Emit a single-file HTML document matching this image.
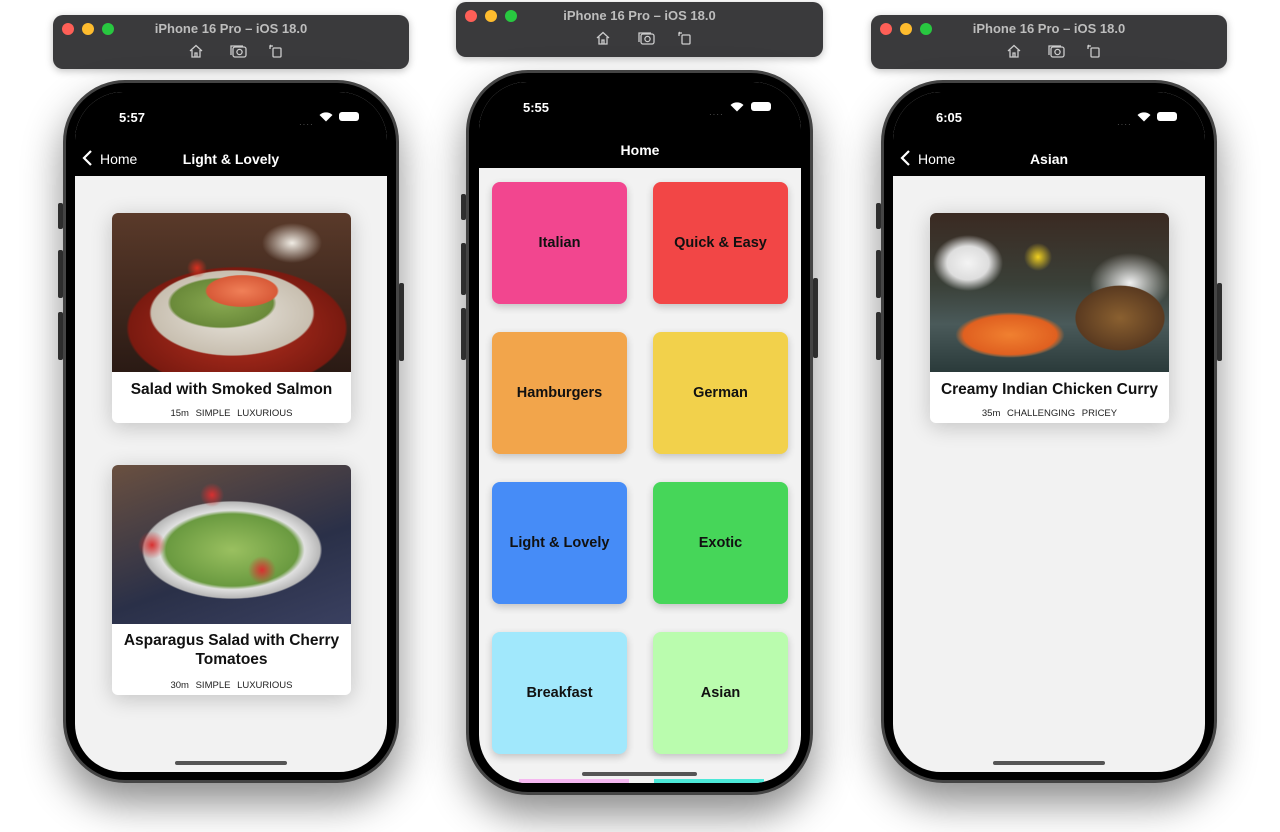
<!DOCTYPE html>
<html><head><meta charset="utf-8"><style>
*{margin:0;padding:0;box-sizing:border-box}
body{width:1280px;height:832px;background:#fff;position:relative;overflow:hidden;font-family:"Liberation Sans",sans-serif}
.a{position:absolute}
.tb{position:absolute;background:#3a3a3c;border-radius:10px;box-shadow:0 2px 8px rgba(0,0,0,.25)}
.tb .t{position:absolute;left:0;right:0;top:6px;text-align:center;color:#bdbdbd;font-weight:bold;font-size:13px}
.dot{position:absolute;top:8px;width:12px;height:12px;border-radius:50%}
.tb svg{position:absolute;top:28px}
.ph{position:absolute;border-radius:62px;background:#444;box-shadow:0 20px 40px rgba(0,0,0,.45)}
.ph .in{position:absolute;inset:3px;border-radius:59px;background:#000}
.scr{position:absolute;border-radius:48px;overflow:hidden;background:#f2f2f2}
.btn{position:absolute;width:5px;background:#3a3a3a;border-radius:2px}
.time{position:absolute;color:#fff;font-size:13px;font-weight:bold}
.nav{position:absolute;left:0;right:0;background:#000;color:#fff}
.card{position:absolute;background:#fff;border-radius:6px;overflow:hidden;box-shadow:0 4px 22px rgba(0,0,0,.2)}
.card .ti{position:absolute;left:0;right:0;text-align:center;font-weight:bold;font-size:15.5px;color:#111;line-height:19px}
.card .m{position:absolute;left:0;right:0;text-align:center;font-size:9.5px;color:#222;word-spacing:4px}
.tile{position:absolute;width:135px;height:122px;border-radius:8px;display:flex;align-items:center;justify-content:center;font-weight:bold;font-size:14.5px;color:#111;box-shadow:0 3px 8px rgba(0,0,0,.2)}
.home{position:absolute;height:4px;border-radius:2px;background:#555}
</style></head><body>

<div class="tb" style="left:53px;top:15px;width:356px;height:54px">
<div class="dot" style="left:9px;background:#fe5f57"></div><div class="dot" style="left:29px;background:#febc2e"></div><div class="dot" style="left:49px;background:#28c840"></div>
<div class="t">iPhone 16 Pro – iOS 18.0</div>
<svg style="left:135px" width="16" height="16" viewBox="0 0 16 16" fill="none" stroke="#ccc" stroke-width="1.3"><path d="M2 8L8 2.5 14 8M4 7v7h8V7M7 14v-4h2v4"/></svg>
<svg style="left:177px" width="18" height="16" viewBox="0 0 18 16" fill="none" stroke="#ccc" stroke-width="1.3"><rect x="3" y="4" width="13" height="10" rx="2"/><circle cx="9.5" cy="9" r="2.6"/><path d="M1 12V3h12"/></svg>
<svg style="left:215px" width="16" height="16" viewBox="0 0 16 16" fill="none" stroke="#ccc" stroke-width="1.3"><rect x="5" y="5" width="8" height="9" rx="1"/><path d="M2 6V3h3M3 2l-1 1 1 1"/></svg>
</div>
<div class="tb" style="left:456px;top:2px;width:367px;height:55px">
<div class="dot" style="left:9px;background:#fe5f57"></div><div class="dot" style="left:29px;background:#febc2e"></div><div class="dot" style="left:49px;background:#28c840"></div>
<div class="t">iPhone 16 Pro – iOS 18.0</div>
<svg style="left:139px" width="16" height="16" viewBox="0 0 16 16" fill="none" stroke="#ccc" stroke-width="1.3"><path d="M2 8L8 2.5 14 8M4 7v7h8V7M7 14v-4h2v4"/></svg>
<svg style="left:182px" width="18" height="16" viewBox="0 0 18 16" fill="none" stroke="#ccc" stroke-width="1.3"><rect x="3" y="4" width="13" height="10" rx="2"/><circle cx="9.5" cy="9" r="2.6"/><path d="M1 12V3h12"/></svg>
<svg style="left:221px" width="16" height="16" viewBox="0 0 16 16" fill="none" stroke="#ccc" stroke-width="1.3"><rect x="5" y="5" width="8" height="9" rx="1"/><path d="M2 6V3h3M3 2l-1 1 1 1"/></svg>
</div>
<div class="tb" style="left:871px;top:15px;width:356px;height:54px">
<div class="dot" style="left:9px;background:#fe5f57"></div><div class="dot" style="left:29px;background:#febc2e"></div><div class="dot" style="left:49px;background:#28c840"></div>
<div class="t">iPhone 16 Pro – iOS 18.0</div>
<svg style="left:135px" width="16" height="16" viewBox="0 0 16 16" fill="none" stroke="#ccc" stroke-width="1.3"><path d="M2 8L8 2.5 14 8M4 7v7h8V7M7 14v-4h2v4"/></svg>
<svg style="left:177px" width="18" height="16" viewBox="0 0 18 16" fill="none" stroke="#ccc" stroke-width="1.3"><rect x="3" y="4" width="13" height="10" rx="2"/><circle cx="9.5" cy="9" r="2.6"/><path d="M1 12V3h12"/></svg>
<svg style="left:215px" width="16" height="16" viewBox="0 0 16 16" fill="none" stroke="#ccc" stroke-width="1.3"><rect x="5" y="5" width="8" height="9" rx="1"/><path d="M2 6V3h3M3 2l-1 1 1 1"/></svg>
</div>

<div class="btn" style="left:58px;top:203px;height:26px"></div><div class="btn" style="left:58px;top:250px;height:48px"></div><div class="btn" style="left:58px;top:312px;height:48px"></div><div class="btn" style="left:399px;top:283px;height:78px"></div>
<div class="btn" style="left:461px;top:194px;height:26px"></div><div class="btn" style="left:461px;top:243px;height:52px"></div><div class="btn" style="left:461px;top:308px;height:52px"></div><div class="btn" style="left:813px;top:278px;height:80px"></div>
<div class="btn" style="left:876px;top:203px;height:26px"></div><div class="btn" style="left:876px;top:250px;height:48px"></div><div class="btn" style="left:876px;top:312px;height:48px"></div><div class="btn" style="left:1217px;top:283px;height:78px"></div>

<div class="ph" style="left:63px;top:80px;width:336px;height:703px"><div class="in"></div></div>
<div class="scr" style="left:75px;top:92px;width:312px;height:680px">
 <div class="nav" style="top:0;height:84px"></div>
 <div class="time" style="left:44px;top:18px">5:57</div>
 <div class="a" style="left:224px;top:28px;color:#666;font-size:8px;letter-spacing:1px">····</div>
 <svg class="a" style="left:244px;top:19px" width="14" height="11" viewBox="0 0 14 11"><path d="M7 10.5L0.5 4a9.3 9.3 0 0 1 13 0z" fill="#fff"/></svg>
 <div class="a" style="left:264px;top:20px;width:20px;height:9px;border-radius:3px;background:#fff"></div>
 <svg class="a" style="left:7px;top:58px" width="12" height="16" viewBox="0 0 12 16"><path d="M9 1L2 8l7 7" fill="none" stroke="#fff" stroke-width="2.2"/></svg>
 <div class="a" style="left:25px;top:59px;color:#fff;font-size:14px">Home</div>
 <div class="a" style="left:0;width:312px;top:59px;text-align:center;color:#fff;font-size:14px;font-weight:bold">Light &amp; Lovely</div>
 <div class="card" style="left:37px;top:121px;width:239px;height:210px">
  <div class="a" style="left:0;top:0;width:239px;height:159px;background:radial-gradient(circle 10px at 85px 55px,#d83020,transparent),radial-gradient(ellipse 50px 22px at 130px 78px,#f08058,#d85a38 70%,transparent 74%),radial-gradient(ellipse 85px 40px at 110px 90px,#88a850,#6a8a3a 60%,transparent 64%),radial-gradient(ellipse 115px 60px at 120px 100px,#e8e4dc,#c8bfb0 70%,transparent 72%),radial-gradient(ellipse 135px 75px at 125px 115px,#b83020,#7a1a10 80%,transparent 82%),radial-gradient(ellipse 30px 20px at 180px 30px,#f0ece4,transparent),linear-gradient(180deg,#5a3a2a,#2a1a14)"></div>
  <div class="ti" style="top:167px">Salad with Smoked Salmon</div>
  <div class="m" style="top:195px">15m SIMPLE LUXURIOUS</div>
 </div>
 <div class="card" style="left:37px;top:373px;width:239px;height:230px">
  <div class="a" style="left:0;top:0;width:239px;height:159px;background:radial-gradient(circle 14px at 40px 80px,#d83030,transparent),radial-gradient(circle 14px at 150px 105px,#d83030,transparent),radial-gradient(circle 12px at 100px 30px,#d83030,transparent),radial-gradient(ellipse 110px 60px at 120px 85px,#9ac060,#6a9a40 60%,#e0e0e0 66%,#b8b8b8 80%,transparent 82%),linear-gradient(160deg,#6a5040,#2a3048 60%,#3a4060)"></div>
  <div class="ti" style="top:166px">Asparagus Salad with Cherry Tomatoes</div>
  <div class="m" style="top:215px">30m SIMPLE LUXURIOUS</div>
 </div>
 <div class="home" style="left:100px;top:669px;width:112px"></div>
</div>

<div class="ph" style="left:466px;top:70px;width:347px;height:725px"><div class="in"></div></div>
<div class="scr" style="left:479px;top:82px;width:322px;height:701px">
 <div class="nav" style="top:0;height:86px"></div>
 <div class="time" style="left:44px;top:18px">5:55</div>
 <div class="a" style="left:230px;top:28px;color:#666;font-size:8px;letter-spacing:1px">····</div>
 <svg class="a" style="left:251px;top:19px" width="14" height="11" viewBox="0 0 14 11"><path d="M7 10.5L0.5 4a9.3 9.3 0 0 1 13 0z" fill="#fff"/></svg>
 <div class="a" style="left:272px;top:20px;width:20px;height:9px;border-radius:3px;background:#fff"></div>
 <div class="a" style="left:0;width:322px;top:60px;text-align:center;color:#fff;font-size:14px;font-weight:bold">Home</div>
 <div class="tile" style="left:13px;top:100px;background:#f2468f">Italian</div>
 <div class="tile" style="left:174px;top:100px;background:#f24646">Quick &amp; Easy</div>
 <div class="tile" style="left:13px;top:250px;background:#f2a54b">Hamburgers</div>
 <div class="tile" style="left:174px;top:250px;background:#f2d14b">German</div>
 <div class="tile" style="left:13px;top:400px;background:#468cf7">Light &amp; Lovely</div>
 <div class="tile" style="left:174px;top:400px;background:#46d659">Exotic</div>
 <div class="tile" style="left:13px;top:550px;background:#a1e8fc">Breakfast</div>
 <div class="tile" style="left:174px;top:550px;background:#bafcae">Asian</div>
 <div class="a" style="left:40px;top:697px;width:110px;height:4px;background:#f5b8f0"></div>
 <div class="a" style="left:175px;top:697px;width:110px;height:4px;background:#4ce8d8"></div>
 <div class="home" style="left:103px;top:690px;width:115px"></div>
</div>

<div class="ph" style="left:881px;top:80px;width:336px;height:703px"><div class="in"></div></div>
<div class="scr" style="left:893px;top:92px;width:312px;height:680px">
 <div class="nav" style="top:0;height:84px"></div>
 <div class="time" style="left:43px;top:18px">6:05</div>
 <div class="a" style="left:224px;top:28px;color:#666;font-size:8px;letter-spacing:1px">····</div>
 <svg class="a" style="left:244px;top:19px" width="14" height="11" viewBox="0 0 14 11"><path d="M7 10.5L0.5 4a9.3 9.3 0 0 1 13 0z" fill="#fff"/></svg>
 <div class="a" style="left:264px;top:20px;width:20px;height:9px;border-radius:3px;background:#fff"></div>
 <svg class="a" style="left:7px;top:58px" width="12" height="16" viewBox="0 0 12 16"><path d="M9 1L2 8l7 7" fill="none" stroke="#fff" stroke-width="2.2"/></svg>
 <div class="a" style="left:25px;top:59px;color:#fff;font-size:14px">Home</div>
 <div class="a" style="left:0;width:312px;top:59px;text-align:center;color:#fff;font-size:14px;font-weight:bold">Asian</div>
 <div class="card" style="left:37px;top:121px;width:239px;height:210px">
  <div class="a" style="left:0;top:0;width:239px;height:159px;background:radial-gradient(circle 14px at 108px 44px,#f0d020,transparent),radial-gradient(ellipse 62px 26px at 80px 122px,#f08030,#e06020 75%,#8a6040 82%,transparent 88%),radial-gradient(ellipse 55px 40px at 190px 105px,#8a6030,#5a3a20 80%,transparent 82%),radial-gradient(ellipse 35px 28px at 38px 50px,#f4f4f4,#ddd 60%,transparent),radial-gradient(ellipse 40px 30px at 200px 70px,#f0f0f0,transparent),linear-gradient(180deg,#3a2a22 0%,#3a4038 45%,#4a5a5a 70%,#2a3a3a)"></div>
  <div class="ti" style="top:167px">Creamy Indian Chicken Curry</div>
  <div class="m" style="top:195px">35m CHALLENGING PRICEY</div>
 </div>
 <div class="home" style="left:100px;top:669px;width:112px"></div>
</div>
</body></html>
